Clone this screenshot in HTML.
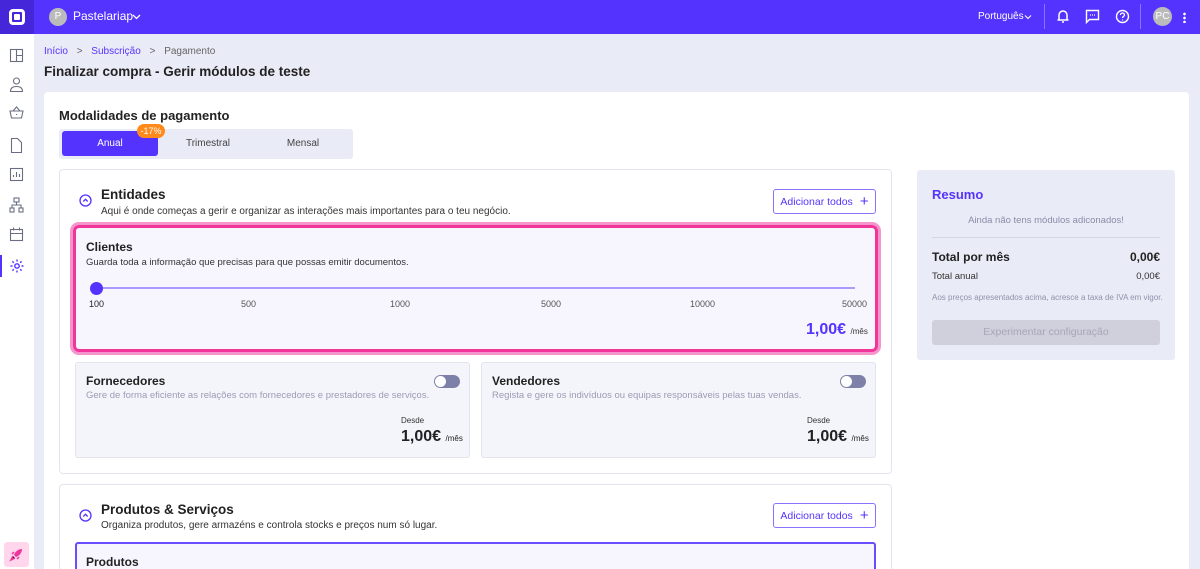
<!DOCTYPE html>
<html style="width:1200px;height:569px;overflow:hidden"><head><meta charset="utf-8"><style>
*{box-sizing:border-box;margin:0;padding:0}
body{width:1200px;height:569px;overflow:hidden;background:#e9ebf6;font-family:"Liberation Sans",sans-serif;color:#222;position:relative}
.a{position:absolute}
.top{left:0;top:0;width:1200px;height:34px;background:#5533ff}
.side{left:0;top:34px;width:34px;height:535px;background:#fff}
.b{font-weight:bold}
.sec{background:#fff;border:1px solid #e4e5ee;border-radius:4px}
.btn{border:1px solid #8a70ff;border-radius:3px;color:#5533ff;font-size:10.5px;display:flex;align-items:center;justify-content:center;gap:7px;background:#fff}
.mod{background:#f4f5fa;border:1px solid #e3e4ee;border-radius:3px}
.tog{width:26px;height:13px;border-radius:7px;background:#7d80a8}
.tog:after{content:"";position:absolute;left:1px;top:1px;width:11px;height:11px;border-radius:50%;background:#fff}
</style></head><body>
<div class="a top"></div>
<div class="a" style="left:0;top:0;width:34px;height:34px;background:#4527d9"></div>
<div class="a" style="left:9px;top:9px;width:16px;height:16px;border:3px solid #fff;border-radius:4px"></div>
<div class="a" style="left:14px;top:14px;width:6px;height:6px;background:#fff;border-radius:1px"></div>
<div class="a" style="left:49px;top:8px;width:18px;height:18px;border-radius:50%;background:#bbb;color:#fff;font-size:10px;text-align:center;line-height:18px">P</div>
<div class="a" style="left:73px;top:9px;color:#fff;font-size:12px">Pastelariap</div>
<svg class="a" style="left:132px;top:12px" width="9" height="9" viewBox="0 0 9 9"><path d="M1 3l3.5 3.5L8 3" stroke="#fff" stroke-width="1.3" fill="none"/></svg>
<div class="a" style="left:978px;top:11px;color:#fff;font-size:10px">Português</div>
<svg class="a" style="left:1024px;top:13px" width="8" height="8" viewBox="0 0 8 8"><path d="M1 2.5l3 3 3-3" stroke="#fff" stroke-width="1.1" fill="none"/></svg>
<div class="a" style="left:1044px;top:4px;width:1px;height:25px;background:#8a75ff"></div>
<div class="a" style="left:1140px;top:4px;width:1px;height:25px;background:#8a75ff"></div>
<svg class="a" style="left:1056px;top:9px" width="14" height="15" viewBox="0 0 14 15"><path d="M3 11V6a4 4 0 018 0v5h1.5H1.5zM6 13h2" stroke="#fff" stroke-width="1.5" fill="none"/></svg>
<svg class="a" style="left:1085px;top:9px" width="15" height="15" viewBox="0 0 15 15"><path d="M1.5 1.5h12v9h-9l-3 3z" stroke="#fff" stroke-width="1.4" fill="none"/><path d="M5 6h1M7 6h1M9 6h1" stroke="#fff" stroke-width="1.3"/></svg>
<svg class="a" style="left:1115px;top:9px" width="15" height="15" viewBox="0 0 15 15"><circle cx="7.5" cy="7.5" r="6" stroke="#fff" stroke-width="1.4" fill="none"/><path d="M5.5 6a2 2 0 114 0c0 1.3-2 1.5-2 3M7.5 10.5v1" stroke="#fff" stroke-width="1.3" fill="none"/></svg>
<div class="a" style="left:1153px;top:7px;width:19px;height:19px;border-radius:50%;background:#bbb;color:#fff;font-size:10px;text-align:center;line-height:19px">PC</div>
<div class="a" style="left:1183px;top:12px;width:3px;height:11px;background:radial-gradient(circle,#fff 1.2px,transparent 1.5px) 0 0/3px 4px"></div>

<div class="a side"></div>
<svg class="a" style="left:0;top:46px" width="34" height="240" viewBox="0 0 34 240" fill="none" stroke="#6a6e82" stroke-width="1.1">
<rect x="10.5" y="3.5" width="12" height="12"/><path d="M16.5 3.5v12M16.5 9.5h6"/>
<circle cx="16.5" cy="35" r="3"/><path d="M10.5 45.5c0-4 3-5 6-5s6 1 6 5z"/>
<path d="M10 65h13l-1.5 7h-10zM13 65l3.5-4 3.5 4M16.5 68v1"/>
<path d="M11.5 92.5h6l4 4v10h-10z"/>
<rect x="10.5" y="122.5" width="12" height="12"/><path d="M13.5 131v-2M16.5 131v-5M19.5 131v-3"/>
<rect x="14" y="152" width="5" height="4"/><rect x="10" y="162" width="4" height="4"/><rect x="19" y="162" width="4" height="4"/><path d="M16.5 156v3M12 162v-3h9v3"/>
<rect x="10.5" y="183.5" width="12" height="11"/><path d="M10.5 187.5h12M13.5 181.5v3M19.5 181.5v3"/>
</svg>
<div class="a" style="left:0;top:255px;width:2px;height:22px;background:#5533ff"></div>
<svg class="a" style="left:9px;top:258px" width="16" height="16" viewBox="0 0 16 16" fill="none" stroke="#5533ff" stroke-width="1.4"><circle cx="8" cy="8" r="2.2"/><path d="M8 1.5v2M8 12.5v2M1.5 8h2M12.5 8h2M3.4 3.4l1.4 1.4M11.2 11.2l1.4 1.4M3.4 12.6l1.4-1.4M11.2 4.8l1.4-1.4"/></svg>
<div class="a" style="left:4px;top:542px;width:25px;height:25px;background:#ffd6ec;border-radius:3px"></div>
<svg class="a" style="left:9px;top:547px" width="15" height="15" viewBox="0 0 15 15"><path d="M13 2c-4 0-7 3-8 6l2 2c3-1 6-4 6-8z" fill="#f0359b"/><path d="M4 9l-2 4 4-2M3 7l2-2M8 12l2-2" stroke="#f0359b" stroke-width="1.5"/></svg>

<div class="a" style="left:44px;top:46px;font-size:10px;color:#5533ff">Início <span style="color:#666;margin:0 6px">&gt;</span> Subscrição <span style="color:#666;margin:0 6px">&gt;</span> <span style="color:#666">Pagamento</span></div>
<div class="a b" style="left:44px;top:64px;font-size:13.5px">Finalizar compra - Gerir módulos de teste</div>

<div class="a" style="left:44px;top:92px;width:1145px;height:477px;background:#fff;border-radius:4px 4px 0 0"></div>
<div class="a b" style="left:59px;top:108px;font-size:13px">Modalidades de pagamento</div>
<div class="a" style="left:59px;top:129px;width:294px;height:30px;background:#e9ebf6;border-radius:3px"></div>
<div class="a" style="left:62px;top:131px;width:96px;height:25px;background:#5533ff;border-radius:3px;color:#fff;font-size:10px;text-align:center;line-height:26px">Anual</div>
<div class="a" style="left:160px;top:131px;width:96px;height:25px;font-size:10px;text-align:center;line-height:26px;color:#444">Trimestral</div>
<div class="a" style="left:255px;top:131px;width:96px;height:25px;font-size:10px;text-align:center;line-height:26px;color:#444">Mensal</div>
<div class="a" style="left:137px;top:124px;width:28px;height:14px;background:#ff8a1a;border-radius:7px;color:#fff;font-size:9px;text-align:center;line-height:14px">-17%</div>

<div class="a sec" style="left:59px;top:169px;width:833px;height:305px"></div>
<svg class="a" style="left:79px;top:194px" width="13" height="13" viewBox="0 0 13 13"><circle cx="6.5" cy="6.5" r="5.5" stroke="#5533ff" stroke-width="1.3" fill="none"/><path d="M4.3 7.5l2.2-2.2 2.2 2.2" stroke="#5533ff" stroke-width="1.3" fill="none"/></svg>
<div class="a b" style="left:101px;top:187px;font-size:13.5px">Entidades</div>
<div class="a" style="left:101px;top:206px;font-size:10px;color:#333">Aqui é onde começas a gerir e organizar as interações mais importantes para o teu negócio.</div>
<div class="a btn" style="left:773px;top:189px;width:103px;height:25px">Adicionar todos <span style="font-size:15px">+</span></div>

<div class="a" style="left:70px;top:222px;width:811px;height:133px;border:3px solid #f595cb;border-radius:9px"></div>
<div class="a" style="left:73px;top:225px;width:805px;height:127px;border:3px solid #f0359b;border-radius:6px;background:#f7f6fe"></div>
<div class="a b" style="left:86px;top:240px;font-size:12px">Clientes</div>
<div class="a" style="left:86px;top:257px;font-size:9.5px;color:#333">Guarda toda a informação que precisas para que possas emitir documentos.</div>
<div class="a" style="left:96px;top:287px;width:759px;height:2px;background:#a99cff"></div>
<div class="a" style="left:90px;top:282px;width:13px;height:13px;border-radius:50%;background:#5533ff"></div>
<div class="a" style="left:89px;top:299px;font-size:9px;color:#222">100</div>
<div class="a" style="left:241px;top:299px;font-size:9px;color:#555">500</div>
<div class="a" style="left:390px;top:299px;font-size:9px;color:#555">1000</div>
<div class="a" style="left:541px;top:299px;font-size:9px;color:#555">5000</div>
<div class="a" style="left:690px;top:299px;font-size:9px;color:#555">10000</div>
<div class="a" style="left:842px;top:299px;font-size:9px;color:#555">50000</div>
<div class="a" style="left:806px;top:321px;font-size:16px;color:#5533ff" ><b>1,00€</b> <span style="font-size:8px;color:#333">/mês</span></div>

<div class="a mod" style="left:75px;top:362px;width:395px;height:96px"></div>
<div class="a b" style="left:86px;top:374px;font-size:12px">Fornecedores</div>
<div class="a" style="left:86px;top:390px;font-size:9.5px;color:#9a9cb4">Gere de forma eficiente as relações com fornecedores e prestadores de serviços.</div>
<div class="a tog" style="left:434px;top:375px"></div>
<div class="a" style="left:401px;top:416px;font-size:8px;color:#333">Desde</div>
<div class="a" style="left:401px;top:428px;font-size:16px"><b>1,00€</b> <span style="font-size:8px">/mês</span></div>

<div class="a mod" style="left:481px;top:362px;width:395px;height:96px"></div>
<div class="a b" style="left:492px;top:374px;font-size:12px">Vendedores</div>
<div class="a" style="left:492px;top:390px;font-size:9.5px;color:#9a9cb4">Regista e gere os indivíduos ou equipas responsáveis pelas tuas vendas.</div>
<div class="a tog" style="left:840px;top:375px"></div>
<div class="a" style="left:807px;top:416px;font-size:8px;color:#333">Desde</div>
<div class="a" style="left:807px;top:428px;font-size:16px"><b>1,00€</b> <span style="font-size:8px">/mês</span></div>

<div class="a sec" style="left:59px;top:484px;width:833px;height:100px"></div>
<svg class="a" style="left:79px;top:509px" width="13" height="13" viewBox="0 0 13 13"><circle cx="6.5" cy="6.5" r="5.5" stroke="#5533ff" stroke-width="1.3" fill="none"/><path d="M4.3 7.5l2.2-2.2 2.2 2.2" stroke="#5533ff" stroke-width="1.3" fill="none"/></svg>
<div class="a b" style="left:101px;top:502px;font-size:13.5px">Produtos &amp; Serviços</div>
<div class="a" style="left:101px;top:520px;font-size:10px;color:#333">Organiza produtos, gere armazéns e controla stocks e preços num só lugar.</div>
<div class="a btn" style="left:773px;top:503px;width:103px;height:25px">Adicionar todos <span style="font-size:15px">+</span></div>
<div class="a" style="left:75px;top:542px;width:801px;height:40px;border:2px solid #6b4dff;border-radius:3px;background:#f7f6fe"></div>
<div class="a b" style="left:86px;top:555px;font-size:12px">Produtos</div>

<div class="a" style="left:917px;top:170px;width:258px;height:190px;background:#e9ebf6;border-radius:3px"></div>
<div class="a b" style="left:932px;top:187px;font-size:13px;color:#5533ff">Resumo</div>
<div class="a" style="left:932px;top:215px;width:228px;text-align:center;font-size:9.5px;color:#8a8ca8">Ainda não tens módulos adiconados!</div>
<div class="a" style="left:932px;top:237px;width:228px;height:1px;background:#d4d6e6"></div>
<div class="a b" style="left:932px;top:250px;font-size:12px">Total por mês</div>
<div class="a b" style="left:1100px;top:250px;width:60px;text-align:right;font-size:12px">0,00€</div>
<div class="a" style="left:932px;top:271px;font-size:9.5px;color:#333">Total anual</div>
<div class="a" style="left:1100px;top:271px;width:60px;text-align:right;font-size:9.5px;color:#333">0,00€</div>
<div class="a" style="left:932px;top:293px;font-size:8px;color:#9092ac">Aos preços apresentados acima, acresce a taxa de IVA em vigor.</div>
<div class="a" style="left:932px;top:320px;width:228px;height:25px;background:#cfd0dc;border-radius:3px;text-align:center;line-height:25px;font-size:10.5px;color:#a5a7b8">Experimentar configuração</div>
</body></html>
